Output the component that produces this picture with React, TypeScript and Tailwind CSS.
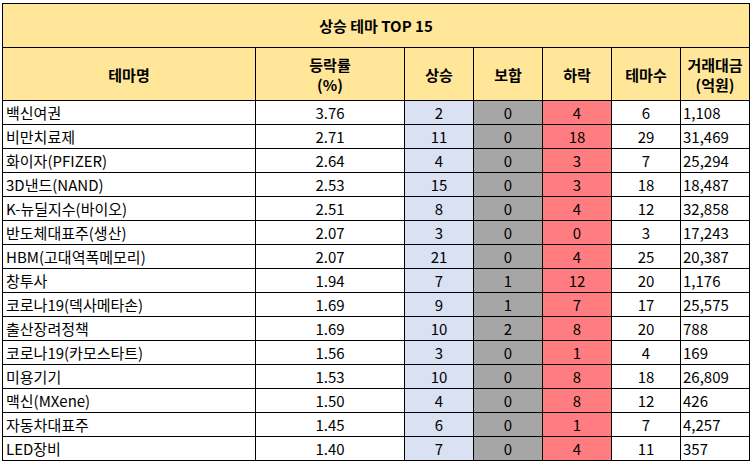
import React from "react";

type Row = [string, string, number, number, number, number, string];

const rows: Row[] = [
  ["백신여권", "3.76", 2, 0, 4, 6, "1,108"],
  ["비만치료제", "2.71", 11, 0, 18, 29, "31,469"],
  ["화이자(PFIZER)", "2.64", 4, 0, 3, 7, "25,294"],
  ["3D낸드(NAND)", "2.53", 15, 0, 3, 18, "18,487"],
  ["K-뉴딜지수(바이오)", "2.51", 8, 0, 4, 12, "32,858"],
  ["반도체대표주(생산)", "2.07", 3, 0, 0, 3, "17,243"],
  ["HBM(고대역폭메모리)", "2.07", 21, 0, 4, 25, "20,387"],
  ["창투사", "1.94", 7, 1, 12, 20, "1,176"],
  ["코로나19(덱사메타손)", "1.69", 9, 1, 7, 17, "25,575"],
  ["출산장려정책", "1.69", 10, 2, 8, 20, "788"],
  ["코로나19(카모스타트)", "1.56", 3, 0, 1, 4, "169"],
  ["미용기기", "1.53", 10, 0, 8, 18, "26,809"],
  ["맥신(MXene)", "1.50", 4, 0, 8, 12, "426"],
  ["자동차대표주", "1.45", 6, 0, 1, 7, "4,257"],
  ["LED장비", "1.40", 7, 0, 4, 11, "357"],
];

const font = { fontFamily: '"Noto Sans CJK KR", "Noto Sans", sans-serif' };

export default function App() {
  return (
    <div className="min-h-screen bg-white pt-[3px] pl-[2px]" style={font}>
      <div className="inline-grid grid-cols-[252px_148px_68px_68px_68px_68px_68px] gap-px bg-black p-px text-[15px] leading-none text-black">
        {/* title */}
        <div className="col-span-7 h-[43px] bg-[#ffe699] flex items-center justify-center font-bold">
          상승 테마 TOP 15
        </div>

        {/* header */}
        <div className="h-[52px] bg-[#ffe699] flex items-center justify-center font-bold">테마명</div>
        <div className="bg-[#ffe699] flex flex-col items-center justify-center gap-[5px] font-bold">
          <span>등락률</span>
          <span>(%)</span>
        </div>
        <div className="bg-[#ffe699] flex items-center justify-center font-bold">상승</div>
        <div className="bg-[#ffe699] flex items-center justify-center font-bold">보합</div>
        <div className="bg-[#ffe699] flex items-center justify-center font-bold">하락</div>
        <div className="bg-[#ffe699] flex items-center justify-center font-bold">테마수</div>
        <div className="bg-[#ffe699] flex flex-col items-center justify-center gap-[5px] font-bold">
          <span>거래대금</span>
          <span>(억원)</span>
        </div>

        {/* data */}
        {rows.map((r) => (
          <React.Fragment key={r[0]}>
            <div className="h-[23px] bg-white flex items-center pl-[3px]">{r[0]}</div>
            <div className="bg-white flex items-center justify-center">{r[1]}</div>
            <div className="bg-[#d9e1f2] flex items-center justify-center">{r[2]}</div>
            <div className="bg-[#a6a6a6] flex items-center justify-center">{r[3]}</div>
            <div className="bg-[#ff7c80] flex items-center justify-center">{r[4]}</div>
            <div className="bg-white flex items-center justify-center">{r[5]}</div>
            <div className="bg-white flex items-center pl-[2px]">{r[6]}</div>
          </React.Fragment>
        ))}
      </div>
    </div>
  );
}
